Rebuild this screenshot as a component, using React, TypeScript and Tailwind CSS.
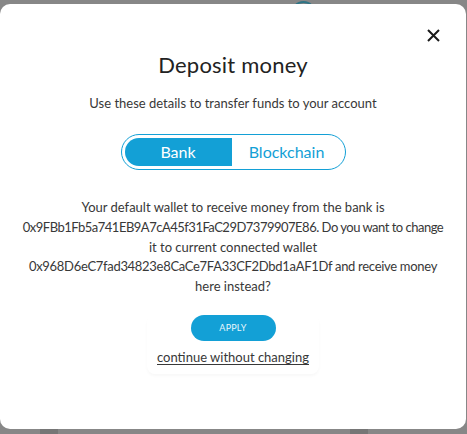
import React from "react";

export default function App() {
  return (
    <div
      className="relative w-[467px] h-[434px] overflow-hidden bg-[#878787]"
      style={{ fontFamily: "Lato, 'Noto Sans', sans-serif" }}
    >
      {/* background items behind overlay */}
      <div className="absolute left-[291px] top-[1px] w-[25px] h-[25px] rounded-full border-2 border-[#2f7485]" />
      <div className="absolute left-[40px] top-[429px] w-[18px] h-[5px] bg-[#767676]" />
      <div className="absolute left-[350px] top-[429px] w-[18px] h-[5px] bg-[#767676]" />

      <div className="relative mt-[4px] h-[425px] w-[466px] rounded-[10px] bg-white flex flex-col items-center">
        <button className="absolute right-[26px] top-[24px] w-[14px] h-[14px] flex items-center justify-center">
          <svg width="13" height="13" viewBox="0 0 13 13" fill="none">
            <path d="M1 1L12 12M12 1L1 12" stroke="#1a1a1a" strokeWidth="2" />
          </svg>
        </button>

        <h2 className="mt-[46px] text-[22px] leading-[30px] text-[#222] font-normal tracking-[0.2px]">Deposit money</h2>
        <p className="mt-[14px] text-[13px] leading-[18px] text-[#383838]">
          Use these details to transfer funds to your account
        </p>

        <div className="mt-[22px] w-[225px] h-[36px] rounded-full border border-[#13a0d6] p-[3px] flex items-stretch">
          <div className="w-[107px] rounded-l-full bg-[#13a0d6] text-white text-[16px] flex items-center justify-center">
            Bank
          </div>
          <div className="flex-1 text-[#13a0d6] text-[16px] flex items-center justify-center">Blockchain</div>
        </div>

        <div className="mt-[28px] flex flex-col items-center text-center text-[13px] leading-[19.8px] text-[#383838] whitespace-nowrap">
          <span>Your default wallet to receive money from the bank is</span>
          <span className="tracking-[-0.5px]">0x9FBb1Fb5a741EB9A7cA45f31FaC29D7379907E86. Do you want to change</span>
          <span>it to current connected wallet</span>
          <span className="tracking-[-0.3px]">0x968D6eC7fad34823e8CaCe7FA33CF2Dbd1aAF1Df and receive money</span>
          <span>here instead?</span>
        </div>

        <div className="mt-[18px] w-[172px] pb-[8px] rounded-[8px] shadow-[0_2px_3px_rgba(0,0,0,0.03)] flex flex-col items-center">
          <button className="w-[85px] h-[26px] rounded-full bg-[#13a0d6] text-[#e6f6fc] text-[9px] tracking-[0.2px]">
            APPLY
          </button>
          <span className="mt-[7px] text-[13px] leading-[18px] text-[#383838] underline underline-offset-2">
            continue without changing
          </span>
        </div>
      </div>
    </div>
  );
}
